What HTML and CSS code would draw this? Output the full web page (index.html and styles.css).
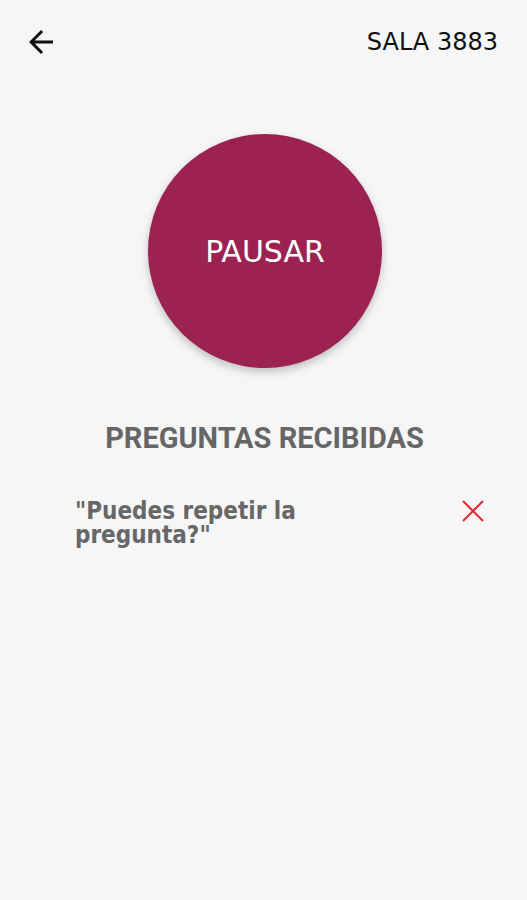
FILE: index.html
```html
<!DOCTYPE html>
<html lang="es">
<head>
<meta charset="utf-8">
<title>Sala 3883</title>
<link rel="stylesheet" href="styles.css">
</head>
<body>
<div class="screen">
  <header class="topbar">
    <button class="back" aria-label="Volver">
      <svg viewBox="0 0 24 24" width="36" height="36"><path d="M20 11H7.83l5.59-5.59L12 4l-8 8 8 8 1.41-1.41L7.83 13H20v-2z" fill="#111"/></svg>
    </button>
    <div class="room">SALA 3883</div>
  </header>
  <div class="circle-wrap">
    <button class="pause">PAUSAR</button>
  </div>
  <h2 class="title">PREGUNTAS RECIBIDAS</h2>
  <ul class="questions">
    <li class="question">
      <span class="q-text">"Puedes repetir la pregunta?"</span>
      <button class="remove" aria-label="Eliminar">
        <svg viewBox="0 0 24 24" width="24" height="24"><path d="M2 2L22 22M22 2L2 22" stroke="#e3262b" stroke-width="2" fill="none"/></svg>
      </button>
    </li>
  </ul>
</div>
</body>
</html>
```
FILE: styles.css
```css
html, body {
  margin: 0;
  padding: 0;
  background: #f6f6f6;
}
.screen {
  width: 527px;
  min-height: 900px;
  display: flex;
  flex-direction: column;
}
.topbar {
  display: flex;
  align-items: center;
  justify-content: space-between;
  padding: 24px 29px 0 23px;
  height: 36px;
}
.back {
  width: 36px;
  height: 36px;
  padding: 0;
  border: 0;
  background: none;
  display: flex;
}
.room {
  font-family: "DejaVu Sans", sans-serif;
  font-size: 24px;
  line-height: 36px;
  color: #111;
}
.circle-wrap {
  display: flex;
  justify-content: center;
  margin-top: 74px;
  padding-left: 3px;
}
.pause {
  width: 234px;
  height: 234px;
  border-radius: 50%;
  border: 0;
  background: #9c2252;
  color: #fff;
  font-family: "DejaVu Sans", sans-serif;
  font-size: 30px;
  display: flex;
  align-items: center;
  justify-content: center;
  padding: 0;
  box-shadow: 0 4px 8px rgba(0, 0, 0, 0.22);
}
.title {
  margin: 54px 0 0;
  text-align: center;
  font-family: Roboto, sans-serif;
  font-weight: 700;
  font-size: 29px;
  line-height: 32px;
  color: #666;
  padding-left: 2px;
}
.questions {
  list-style: none;
  margin: 45px 0 0;
  padding: 0 42px 0 75px;
}
.question {
  display: flex;
  justify-content: space-between;
  align-items: flex-start;
}
.q-text {
  max-width: 260px;
  font-family: "DejaVu Sans Condensed", "DejaVu Sans", sans-serif;
  font-weight: 700;
  font-size: 24px;
  line-height: 24px;
  color: #676767;
}
.remove {
  margin-top: 0;
  width: 24px;
  height: 24px;
  padding: 0;
  border: 0;
  background: none;
  display: flex;
}
```
